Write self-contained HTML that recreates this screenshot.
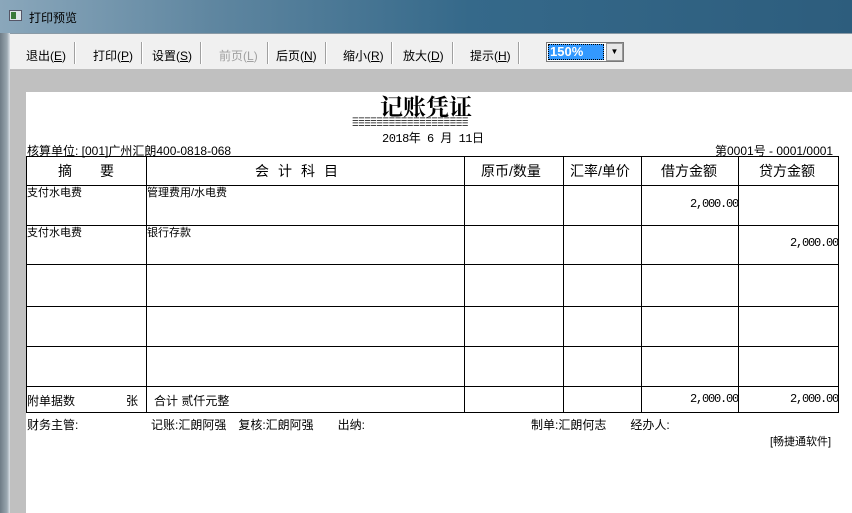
<!DOCTYPE html>
<html><head><meta charset="utf-8"><style>
*{margin:0;padding:0;box-sizing:border-box}
body{width:852px;height:513px;overflow:hidden;position:relative;background:#c0c0c0;font-family:"Liberation Sans","Noto Sans CJK SC",sans-serif;font-size:12px;color:#000}
.abs{position:absolute}
#title{left:0;top:0;width:852px;height:33px;background:linear-gradient(90deg,#8aa7bb 0%,#5f86a0 25%,#35698a 55%,#2d5d7d 100%)}
#frame{left:0;top:33px;width:10px;height:480px;background:linear-gradient(90deg,#6e7c86,#9aa7b0 70%,#dde3e8)}
#tb{left:10px;top:33px;width:842px;height:36px;background:#f0f0f0;border-top:1px solid #8a9aa6}
.btn{position:absolute;top:13px;font-size:12px;color:#000}
.sep{position:absolute;top:8px;width:2px;height:22px;border-left:1px solid #a0a0a0;border-right:1px solid #fff}
#page{left:26px;top:92px;width:826px;height:421px;background:#fff}
.t{position:absolute;white-space:nowrap}
.h{position:absolute;background:#000;height:1px}
.v{position:absolute;background:#000;width:1px}
.m{font-family:"Liberation Mono","Noto Sans CJK SC",monospace;font-size:12px}
.n{position:absolute;white-space:nowrap;font-family:"Liberation Mono",monospace;font-size:12px;letter-spacing:-1.2px;text-align:right;width:96px}
.s{font-size:11px}
</style></head><body>
<div class="abs" id="title"></div>
<div class="abs" style="left:9px;top:10px;width:13px;height:11px;background:#dfe6ea;border:1px solid #556"></div>
<div class="abs" style="left:11px;top:12px;width:5px;height:7px;background:#3a7a3a"></div>
<div class="t" style="left:29px;top:9px;color:#000;font-size:12px">打印预览</div>
<div class="abs" id="frame"></div>
<div class="abs" id="tb">
<span class="btn" style="left:16px">退出(<u>E</u>)</span><span class="sep" style="left:64px"></span>
<span class="btn" style="left:83px">打印(<u>P</u>)</span><span class="sep" style="left:131px"></span>
<span class="btn" style="left:142px">设置(<u>S</u>)</span><span class="sep" style="left:190px"></span>
<span class="btn" style="left:209px;color:#a0a0a0">前页(<u>L</u>)</span><span class="sep" style="left:257px"></span>
<span class="btn" style="left:266px">后页(<u>N</u>)</span><span class="sep" style="left:315px"></span>
<span class="btn" style="left:333px">缩小(<u>R</u>)</span><span class="sep" style="left:381px"></span>
<span class="btn" style="left:393px">放大(<u>D</u>)</span><span class="sep" style="left:442px"></span>
<span class="btn" style="left:460px">提示(<u>H</u>)</span><span class="sep" style="left:508px"></span>
<div class="abs" style="left:536px;top:8px;width:78px;height:20px;border:1px solid #7a7a7a;background:#fff"></div>
<div class="abs" style="left:538px;top:10px;width:56px;height:16px;background:#3399ff;border:1px dotted #000;color:#fff;font-size:13px;font-weight:bold;line-height:14px;padding-left:1px">150%</div>
<div class="abs" style="left:596px;top:9px;width:17px;height:18px;background:#e8e8e8;border:1px solid #999;font-size:8px;text-align:center;line-height:16px">▼</div>
</div>
<div class="abs" id="page"></div>
<div class="t" style="left:380px;top:89px;font-size:23px;font-weight:bold;font-family:'Noto Serif CJK SC',serif">记账凭证</div>
<div class="t m" style="left:352px;top:119px;font-size:11px;letter-spacing:-0.5px;line-height:5px">===================<br>===================</div>
<div class="t m" style="left:382px;top:129px;letter-spacing:-0.5px">2018年 6 月 11日</div>
<div class="t" style="left:27px;top:142px">核算单位: [001]广州汇朗400-0818-068</div>
<div class="t" style="left:715px;top:142px">第0001号 - 0001/0001</div>
<div class="h" style="left:26px;top:156px;width:813px"></div>
<div class="h" style="left:26px;top:185px;width:813px"></div>
<div class="h" style="left:26px;top:225px;width:813px"></div>
<div class="h" style="left:26px;top:264px;width:813px"></div>
<div class="h" style="left:26px;top:306px;width:813px"></div>
<div class="h" style="left:26px;top:346px;width:813px"></div>
<div class="h" style="left:26px;top:386px;width:813px"></div>
<div class="h" style="left:26px;top:412px;width:813px"></div>
<div class="v" style="left:26px;top:156px;height:257px"></div>
<div class="v" style="left:146px;top:156px;height:257px"></div>
<div class="v" style="left:464px;top:156px;height:257px"></div>
<div class="v" style="left:563px;top:156px;height:257px"></div>
<div class="v" style="left:641px;top:156px;height:257px"></div>
<div class="v" style="left:738px;top:156px;height:257px"></div>
<div class="v" style="left:838px;top:156px;height:257px"></div>
<div class="t" style="left:58px;top:161px;font-size:14px">摘　　要</div>
<div class="t" style="left:255px;top:161px;font-size:14px;letter-spacing:9px">会计科目</div>
<div class="t" style="left:481px;top:161px;font-size:14px">原币/数量</div>
<div class="t" style="left:570px;top:161px;font-size:14px">汇率/单价</div>
<div class="t" style="left:661px;top:161px;font-size:14px">借方金额</div>
<div class="t" style="left:759px;top:161px;font-size:14px">贷方金额</div>
<div class="t s" style="left:27px;top:184px">支付水电费</div>
<div class="t s" style="left:147px;top:184px">管理费用/水电费</div>
<div class="n" style="left:642px;top:197px">2,000.00</div>
<div class="t s" style="left:27px;top:224px">支付水电费</div>
<div class="t s" style="left:147px;top:224px">银行存款</div>
<div class="n" style="left:742px;top:236px">2,000.00</div>
<div class="t" style="left:27px;top:392px">附单据数</div>
<div class="t" style="left:126px;top:392px">张</div>
<div class="t" style="left:154px;top:392px">合计 贰仟元整</div>
<div class="n" style="left:642px;top:392px">2,000.00</div>
<div class="n" style="left:742px;top:392px">2,000.00</div>
<div class="t" style="left:27px;top:416px">财务主管:</div>
<div class="t" style="left:151px;top:416px">记账:汇朗阿强　复核:汇朗阿强　　出纳:</div>
<div class="t" style="left:531px;top:416px">制单:汇朗何志　　经办人:</div>
<div class="t s" style="left:770px;top:433px">[畅捷通软件]</div>
</body></html>
